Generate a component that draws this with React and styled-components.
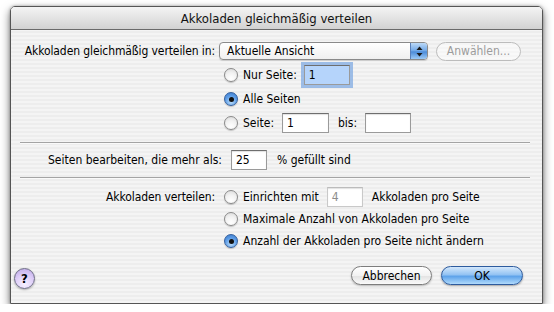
import styled, { createGlobalStyle, css } from 'styled-components';

const GlobalStyle = createGlobalStyle`
    body {
        margin: 0;
        background: #ffffff;
        font-family: "DejaVu Sans Condensed", "DejaVu Sans", sans-serif;
        font-size: 12px;
        color: #000;
    }
`;

const Page = styled.div`
    padding: 6px 0 0 10px;
`;

const Window = styled.div`
    width: 531px;
    height: 296px;
    border: 1px solid #555;
    border-radius: 5px 5px 0 0;
    box-shadow: 0 4px 10px rgba(0, 0, 0, 0.55), 0 0 3px rgba(0, 0, 0, 0.3);
    overflow: hidden;
    display: flex;
    flex-direction: column;
    background: repeating-linear-gradient(#ededed 0 2px, #f4f4f4 2px 4px);
`;

const TitleBar = styled.div`
    height: 22px;
    flex: none;
    display: flex;
    align-items: center;
    justify-content: center;
    font-size: 13px;
    color: #111;
    background: linear-gradient(#f4f4f4, #d2d2d2);
    border-bottom: 1px solid #6a6a6a;
`;

const Content = styled.div`
    flex: 1;
    display: flex;
    flex-direction: column;
    padding-top: 9px;
`;

const FormGrid = styled.div`
    display: grid;
    grid-template-columns: 204px 1fr;
    column-gap: 4px;
    grid-auto-rows: ${({ rowHeight }) => rowHeight}px;
    align-items: center;
    margin-top: ${({ spaceTop }) => spaceTop || 0}px;
`;

const Label = styled.div`
    text-align: right;
    white-space: nowrap;
    letter-spacing: -0.1px;
`;

const Controls = styled.div`
    grid-column: 2;
    display: flex;
    align-items: center;
    gap: 8px;
`;

const Popup = styled.div`
    width: 209px;
    height: 18px;
    box-sizing: border-box;
    border: 1px solid #8a8a8a;
    border-radius: 4px;
    background: linear-gradient(#ffffff, #f0f0f0);
    display: flex;
    align-items: center;
    overflow: hidden;
    box-shadow: 0 1px 1px rgba(0, 0, 0, 0.15);
`;

const PopupText = styled.span`
    flex: 1;
    padding-left: 7px;
`;

const PopupCap = styled.span`
    width: 16px;
    height: 100%;
    display: flex;
    align-items: center;
    justify-content: center;
    border-left: 1px solid #5a7fb8;
    background: linear-gradient(#bcd9f7 0%, #6ea6e6 50%, #4a8ad8 55%, #9ccaf6 100%);
`;

const PillButton = styled.div`
    width: ${({ width }) => width}px;
    height: 19px;
    box-sizing: border-box;
    border-radius: 10px;
    display: flex;
    align-items: center;
    justify-content: center;
    font-size: 12px;
    ${({ variant }) =>
        variant === 'default'
            ? css`
                  border: 1px solid #2d5b9e;
                  background: linear-gradient(#d3e7fb 0%, #93c3f3 45%, #5ea3ea 55%, #b0dafc 100%);
                  box-shadow: 0 1px 2px rgba(0, 0, 0, 0.35);
              `
            : variant === 'disabled'
            ? css`
                  border: 1px solid #bcbcbc;
                  background: rgba(255, 255, 255, 0.45);
                  color: #9c9c9c;
              `
            : css`
                  border: 1px solid #7d7d7d;
                  background: linear-gradient(#ffffff 0%, #f2f2f2 50%, #e4e4e4 55%, #fafafa 100%);
                  box-shadow: 0 1px 2px rgba(0, 0, 0, 0.25);
              `}
`;

const RadioRow = styled.label`
    display: flex;
    align-items: center;
    gap: 5px;
    padding-left: 5px;
    white-space: nowrap;
`;

const RadioCircle = styled.span`
    width: 14px;
    height: 14px;
    box-sizing: border-box;
    border-radius: 50%;
    display: flex;
    align-items: center;
    justify-content: center;
    flex: none;
    ${({ checked }) =>
        checked
            ? css`
                  border: 1px solid #34609e;
                  background: radial-gradient(circle at 50% 75%, #b9dcfb 0%, #5c9ce6 55%, #3a78c8 100%);
                  &::after {
                      content: '';
                      width: 5px;
                      height: 5px;
                      border-radius: 50%;
                      background: #111;
                  }
              `
            : css`
                  border: 1px solid #8a8a8a;
                  background: radial-gradient(circle at 50% 80%, #ffffff 0%, #f2f2f2 50%, #d8d8d8 100%);
              `}
    box-shadow: 0 1px 1px rgba(0, 0, 0, 0.2);
`;

const Field = styled.span`
    width: ${({ width }) => width}px;
    height: 20px;
    box-sizing: border-box;
    display: flex;
    align-items: center;
    padding-left: 4px;
    margin-left: ${({ gapLeft }) => gapLeft || 0}px;
    margin-right: ${({ gapRight }) => gapRight || 0}px;
    border: 1px solid ${({ disabled }) => (disabled ? '#c9c9c9' : '#9a9a9a')};
    border-top-color: ${({ disabled }) => (disabled ? '#bcbcbc' : '#6e6e6e')};
    background: ${({ focused }) => (focused ? '#b5d4fb' : '#ffffff')};
    color: ${({ disabled }) => (disabled ? '#8c8c8c' : '#000')};
    box-shadow: ${({ focused }) =>
        focused ? '0 0 0 3px rgba(110, 160, 225, 0.65)' : 'inset 0 1px 1px rgba(0, 0, 0, 0.12)'};
`;

const Separator = styled.div`
    height: 1px;
    margin: ${({ spaceTop }) => spaceTop}px 12px 0 9px;
    background: #a4a4a4;
    border-bottom: 1px solid #fafafa;
`;

const InlineRow = styled.div`
    height: 24px;
    margin-top: ${({ spaceTop }) => spaceTop}px;
    padding-left: 37px;
    display: flex;
    align-items: center;
    gap: 5px;
    white-space: nowrap;
`;

const Footer = styled.div`
    margin-top: 14px;
    padding: 0 19px 0 3px;
    display: flex;
    align-items: flex-start;
    gap: 9px;
`;

const HelpButton = styled.div`
    width: 21px;
    height: 21px;
    margin-top: 2px;
    margin-right: auto;
    box-sizing: border-box;
    border-radius: 50%;
    border: 1px solid #6d6d86;
    background: radial-gradient(circle at 50% 80%, #f6f0ff 0%, #dccbf7 55%, #b9a3e6 100%);
    display: flex;
    align-items: center;
    justify-content: center;
    font-weight: bold;
    font-size: 13px;
    box-shadow: 0 1px 2px rgba(0, 0, 0, 0.3);
`;

const ArrowsIcon = () => (
    <svg width="7" height="11" viewBox="0 0 7 11">
        <path d="M3.5 0.5 L6.5 4 L0.5 4 Z" fill="#1a1a1a" />
        <path d="M3.5 10.5 L6.5 7 L0.5 7 Z" fill="#1a1a1a" />
    </svg>
);

const Radio = ({ checked, children }) => (
    <RadioRow>
        <RadioCircle checked={checked} />
        {children}
    </RadioRow>
);

const App = () => {
    return (
        <Page>
            <GlobalStyle />
            <Window>
                <TitleBar>Akkoladen gleichmäßig verteilen</TitleBar>
                <Content>
                    <FormGrid rowHeight={24}>
                        <Label>Akkoladen gleichmäßig verteilen in:</Label>
                        <Controls>
                            <Popup>
                                <PopupText>Aktuelle Ansicht</PopupText>
                                <PopupCap>
                                    <ArrowsIcon />
                                </PopupCap>
                            </Popup>
                            <PillButton width={85} variant="disabled">Anwählen...</PillButton>
                        </Controls>
                        <Controls>
                            <Radio>
                                Nur Seite:
                                <Field width={46} gapLeft={2} focused>1</Field>
                            </Radio>
                        </Controls>
                        <Controls>
                            <Radio checked>Alle Seiten</Radio>
                        </Controls>
                        <Controls>
                            <Radio>
                                Seite:
                                <Field width={47} gapLeft={3} gapRight={4}>1</Field>
                                bis:
                                <Field width={46} gapLeft={3} />
                            </Radio>
                        </Controls>
                    </FormGrid>

                    <Separator spaceTop={7} />

                    <InlineRow spaceTop={4}>
                        Seiten bearbeiten, die mehr als:
                        <Field width={36} gapLeft={4} gapRight={5}>25</Field>
                        % gefüllt sind
                    </InlineRow>

                    <Separator spaceTop={5} />

                    <FormGrid rowHeight={22} spaceTop={7}>
                        <Label>Akkoladen verteilen:</Label>
                        <Controls>
                            <Radio>
                                Einrichten mit
                                <Field width={36} gapLeft={3} gapRight={4} disabled>4</Field>
                                Akkoladen pro Seite
                            </Radio>
                        </Controls>
                        <Controls>
                            <Radio>Maximale Anzahl von Akkoladen pro Seite</Radio>
                        </Controls>
                        <Controls>
                            <Radio checked>Anzahl der Akkoladen pro Seite nicht ändern</Radio>
                        </Controls>
                    </FormGrid>

                    <Footer>
                        <HelpButton>?</HelpButton>
                        <PillButton width={81}>Abbrechen</PillButton>
                        <PillButton width={82} variant="default">OK</PillButton>
                    </Footer>
                </Content>
            </Window>
        </Page>
    );
};

export default App;
